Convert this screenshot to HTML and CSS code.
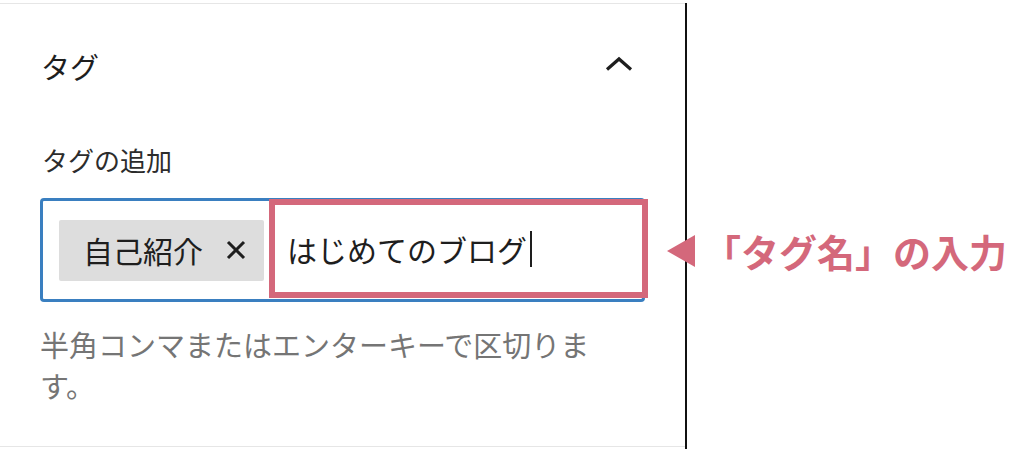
FILE: index.html
```html
<!DOCTYPE html>
<html lang="ja">
<head>
  <meta charset="UTF-8">
  <meta name="viewport" content="width=device-width, initial-scale=1.0">
  <title>タグ</title>
  <link rel="stylesheet" href="styles.css">
</head>
<body>
  <section class="panel">
    <header class="panel-head">
      <h2>タグ</h2>
      <svg class="chevron" width="28" height="16" viewBox="0 0 28 16" aria-hidden="true">
        <path d="M2 13.5 L14 3 L26 13.5" fill="none" stroke="#1e1e1e" stroke-width="3.2"/>
      </svg>
    </header>

    <div class="panel-body">
      <label class="field-label">タグの追加</label>
      <div class="tag-input">
        <span class="chip">
          自己紹介
          <svg class="chip-x" width="20" height="20" viewBox="0 0 20 20" aria-hidden="true">
            <path d="M2 2 L18 18 M18 2 L2 18" stroke="#1e1e1e" stroke-width="3"/>
          </svg>
        </span>
        <div class="entry">はじめてのブログ<span class="caret"></span></div>
      </div>
      <p class="help">半角コンマまたはエンターキーで区切ります。</p>
    </div>
  </section>

  <div class="divider"></div>

  <div class="note">
    <span class="arrow"></span>
    <span class="note-text">「タグ名」の入力</span>
  </div>
</body>
</html>
```

FILE: styles.css
```css
:root {
  font-family: "Noto Sans CJK JP", "Noto Sans", sans-serif;
  color: #1e1e1e;
}
body {
  margin: 0;
  height: 100vh;
  display: flex;
  background: #fff;
  overflow: hidden;
}
.panel {
  width: 685px;
  margin-top: 3px;
  align-self: flex-start;
  border-top: 1px solid #e6e6e6;
  border-bottom: 1px solid #e6e6e6;
  box-sizing: border-box;
  height: 444px;
}
.panel-head {
  display: flex;
  align-items: center;
  justify-content: space-between;
  height: 124px;
  padding: 0 52px 0 41px;
}
.panel-head h2 {
  margin: 0;
  font-size: 29px;
  font-weight: 400;
  line-height: 40px;
}
.chevron {
  margin-top: -4px;
}
.panel-body {
  display: flex;
  flex-direction: column;
  padding-left: 40px;
}
.field-label {
  margin-top: 14px;
  font-size: 26px;
  line-height: 36px;
  color: #2c2c2c;
  padding-left: 2px;
}
.tag-input {
  margin-top: 20px;
  width: 605px;
  height: 104px;
  box-sizing: border-box;
  border: 3px solid #3a7fc0;
  border-radius: 4px;
  display: flex;
  align-items: center;
  padding-left: 16px;
}
.chip {
  display: flex;
  align-items: center;
  gap: 23px;
  height: 61px;
  box-sizing: border-box;
  padding: 0 18px 0 24px;
  background: #dddddd;
  border-radius: 2px;
  font-size: 30px;
  color: #1e1e1e;
}
.chip-x {
  flex-shrink: 0;
}
.entry {
  flex: 1;
  align-self: stretch;
  margin: -2px -6px 1px 5px;
  border: 6px solid #d4687b;
  display: flex;
  align-items: center;
  padding-left: 12px;
  font-size: 30px;
  color: #1e1e1e;
}
.caret {
  display: inline-block;
  width: 2px;
  height: 36px;
  margin-left: 3px;
  background: #1e1e1e;
}
.help {
  margin: 22px 0 0;
  max-width: 565px;
  font-size: 29px;
  line-height: 41px;
  color: #757575;
}
.divider {
  width: 2px;
  margin-top: 3px;
  background: #111;
}
.note {
  display: flex;
  align-items: center;
  gap: 8px;
  margin-left: -20px;
  padding-top: 229px;
  align-self: flex-start;
  position: relative;
}
.arrow {
  width: 0;
  height: 0;
  border-top: 16px solid transparent;
  border-bottom: 16px solid transparent;
  border-right: 28px solid #d4687b;
}
.note-text {
  font-size: 38px;
  font-weight: 700;
  line-height: 44px;
  color: #d4687b;
  white-space: nowrap;
}
```
